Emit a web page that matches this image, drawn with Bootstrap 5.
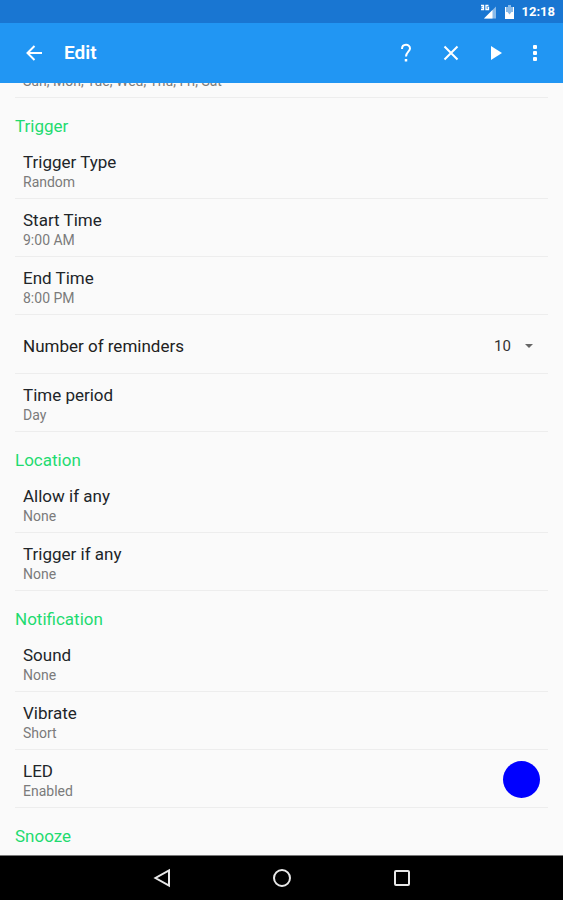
<!DOCTYPE html>
<html lang="en">
<head>
<meta charset="utf-8">
<meta name="viewport" content="width=device-width, initial-scale=1">
<title>Edit</title>
<link rel="stylesheet" href="https://cdn.jsdelivr.net/npm/bootstrap@5.3.0/dist/css/bootstrap.min.css">
<style>
body { font-family: Roboto, "Noto Sans", sans-serif; background: #fafafa; color: #212121; }
svg { display: block; }
.status-strip { height: 23px; background: #1976d2; font-size: 13px; line-height: 24px; padding: 1px 8px 0 0; }
.app-bar { height: 60px; background: #2196f3; padding: 0 10px 0 16px; }
.app-title { font-size: 19px; line-height: 24px; font-weight: 600; margin-left: 12px; }
.icon-btn { width: 36px; height: 36px; }
.app-actions { gap: 9px; margin-right: 3px; }
.settings { padding: 0 15px; }
.section-title { font-size: 17px; line-height: 20px; height: 43px; padding-top: 18px; color: #1fdb70; font-weight: 400; }
.setting { padding: 11px 8px 6px; border-bottom: 1px solid #ededed !important; }
.setting-count { height: 59px; padding-top: 3px; padding-bottom: 0; }
.setting-name { font-size: 17px; line-height: 20px; }
.setting-value { font-size: 14px; line-height: 20px; color: #7b7b7b; }
.count-select { width: 54px; padding: 0 28px 0 8px; font-size: 15px; line-height: 24px; color: #333;
  background: url("data:image/svg+xml,%3Csvg xmlns='http://www.w3.org/2000/svg' viewBox='0 0 8 4'%3E%3Cpath d='M0 0h8L4 4z' fill='%23666'/%3E%3C/svg%3E") no-repeat right 7px center / 8px 4px; }
.led-dot { width: 37px; height: 37px; background: #0000ff; }
.system-nav { height: 45px; gap: 84px; border-top: 1px solid #777; }
</style>
<script defer src="https://cdn.jsdelivr.net/npm/bootstrap@5.3.0/dist/js/bootstrap.bundle.min.js"></script>
</head>
<body>
<div class="vh-100 d-flex flex-column overflow-hidden">
  <div class="status-strip d-flex justify-content-end align-items-center flex-shrink-0 text-white fw-bold">
    <svg width="18" height="16" viewBox="0 0 18 16" role="img" aria-label="3G signal">
      <g fill="none" stroke="#fff" stroke-width="1.3"><path d="M2 1.500h2.500v4H2M2.500 3.500h2M9.500 1.500H7v4h2.500V3.500H8.500"/></g>
      <path d="M5 14.500L17 2.500v12z" fill="#8bbbe9"/><path d="M5 14.500L13.500 6v8.500z" fill="#fff"/>
    </svg>
    <svg class="ms-2 me-2" width="9" height="14" viewBox="0 0 9 14" role="img" aria-label="Battery">
      <path d="M3 0h3v2h3v12H0V2h3z" fill="#8bbbe9"/><path d="M0 7h2.500L4.500 9.500 6.500 7H9v7H0z" fill="#fff"/><path d="M0 2h1v5H0zM8 2h1v5H8z" fill="#fff"/>
    </svg>
    <span>12:18</span>
  </div>

  <header class="app-bar d-flex align-items-center flex-shrink-0 text-white">
    <button class="icon-btn btn p-0 border-0 d-flex align-items-center justify-content-center text-white" type="button" aria-label="Back">
      <svg width="18" height="18" viewBox="0 0 18 18" fill="none" stroke="currentColor" stroke-width="2"><path d="M17 9H2.500M9.500 2L2.500 9l7 7"/></svg>
    </button>
    <h1 class="app-title mb-0 me-auto">Edit</h1>
    <div class="app-actions d-flex">
      <button class="icon-btn btn p-0 border-0 d-flex align-items-center justify-content-center text-white" type="button" aria-label="Help">
        <svg width="14" height="20" viewBox="0 0 14 20" fill="none" stroke="currentColor" stroke-width="2"><path d="M3 6C3 0.500 11 0.500 11 5.500C11 8.500 7 9 7 13.500"/><path d="M7 16v2.500" stroke-width="2.500"/></svg>
      </button>
      <button class="icon-btn btn p-0 border-0 d-flex align-items-center justify-content-center text-white" type="button" aria-label="Discard">
        <svg width="16" height="16" viewBox="0 0 16 16" fill="none" stroke="currentColor" stroke-width="2"><path d="M1.500 1.500l13 13M14.500 1.500l-13 13"/></svg>
      </button>
      <button class="icon-btn btn p-0 border-0 d-flex align-items-center justify-content-center text-white" type="button" aria-label="Play">
        <svg width="12" height="14" viewBox="0 0 12 14" fill="currentColor"><path d="M1 0v14l11-7z"/></svg>
      </button>
    </div>
    <button class="icon-btn btn p-0 border-0 d-flex align-items-center justify-content-center text-white" type="button" aria-label="More options">
      <svg width="4" height="16" viewBox="0 0 4 16" fill="currentColor"><rect width="4" height="4" rx="1"/><rect y="6" width="4" height="4" rx="1"/><rect y="12" width="4" height="4" rx="1"/></svg>
    </button>
  </header>

  <main class="settings flex-grow-1 d-flex flex-column justify-content-end overflow-hidden">
    <button class="setting btn border-0 rounded-0 text-start d-block w-100" type="button"><span class="setting-value d-block">Sun, Mon, Tue, Wed, Thu, Fri, Sat</span></button>

    <h2 class="section-title mb-0 flex-shrink-0">Trigger</h2>
    <button class="setting btn border-0 rounded-0 text-start w-100" type="button"><span class="setting-name d-block">Trigger Type</span><span class="setting-value d-block">Random</span></button>
    <button class="setting btn border-0 rounded-0 text-start w-100" type="button"><span class="setting-name d-block">Start Time</span><span class="setting-value d-block">9:00 AM</span></button>
    <button class="setting btn border-0 rounded-0 text-start w-100" type="button"><span class="setting-name d-block">End Time</span><span class="setting-value d-block">8:00 PM</span></button>
    <div class="setting setting-count d-flex align-items-center justify-content-between flex-shrink-0">
      <label class="setting-name" for="reminder-count">Number of reminders</label>
      <select class="count-select form-select border-0 rounded-0" id="reminder-count"><option>10</option></select>
    </div>
    <button class="setting btn border-0 rounded-0 text-start w-100" type="button"><span class="setting-name d-block">Time period</span><span class="setting-value d-block">Day</span></button>

    <h2 class="section-title mb-0 flex-shrink-0">Location</h2>
    <button class="setting btn border-0 rounded-0 text-start w-100" type="button"><span class="setting-name d-block">Allow if any</span><span class="setting-value d-block">None</span></button>
    <button class="setting btn border-0 rounded-0 text-start w-100" type="button"><span class="setting-name d-block">Trigger if any</span><span class="setting-value d-block">None</span></button>

    <h2 class="section-title mb-0 flex-shrink-0">Notification</h2>
    <button class="setting btn border-0 rounded-0 text-start w-100" type="button"><span class="setting-name d-block">Sound</span><span class="setting-value d-block">None</span></button>
    <button class="setting btn border-0 rounded-0 text-start w-100" type="button"><span class="setting-name d-block">Vibrate</span><span class="setting-value d-block">Short</span></button>
    <button class="setting btn border-0 rounded-0 text-start w-100 d-flex align-items-start justify-content-between" type="button">
      <span><span class="setting-name d-block">LED</span><span class="setting-value d-block">Enabled</span></span>
      <span class="led-dot rounded-circle"></span>
    </button>

    <h2 class="section-title mb-1 flex-shrink-0">Snooze</h2>
  </main>

  <nav class="system-nav bg-black d-flex align-items-center justify-content-center flex-shrink-0" aria-label="System">
    <button class="icon-btn btn p-0 border-0 d-flex align-items-center justify-content-center" type="button" aria-label="Back">
      <svg width="18" height="20" viewBox="0 0 18 20" fill="none" stroke="#e8e8e8" stroke-width="2"><path d="M16 2.500v15L2.500 10z"/></svg>
    </button>
    <button class="icon-btn btn p-0 border-0 d-flex align-items-center justify-content-center" type="button" aria-label="Home">
      <svg width="20" height="20" viewBox="0 0 20 20" fill="none" stroke="#e8e8e8" stroke-width="2"><circle cx="10" cy="10" r="8"/></svg>
    </button>
    <button class="icon-btn btn p-0 border-0 d-flex align-items-center justify-content-center" type="button" aria-label="Recent apps">
      <svg width="18" height="18" viewBox="0 0 18 18" fill="none" stroke="#e8e8e8" stroke-width="2"><rect x="2" y="2" width="14" height="14" rx="1"/></svg>
    </button>
  </nav>
</div>
</body>
</html>
